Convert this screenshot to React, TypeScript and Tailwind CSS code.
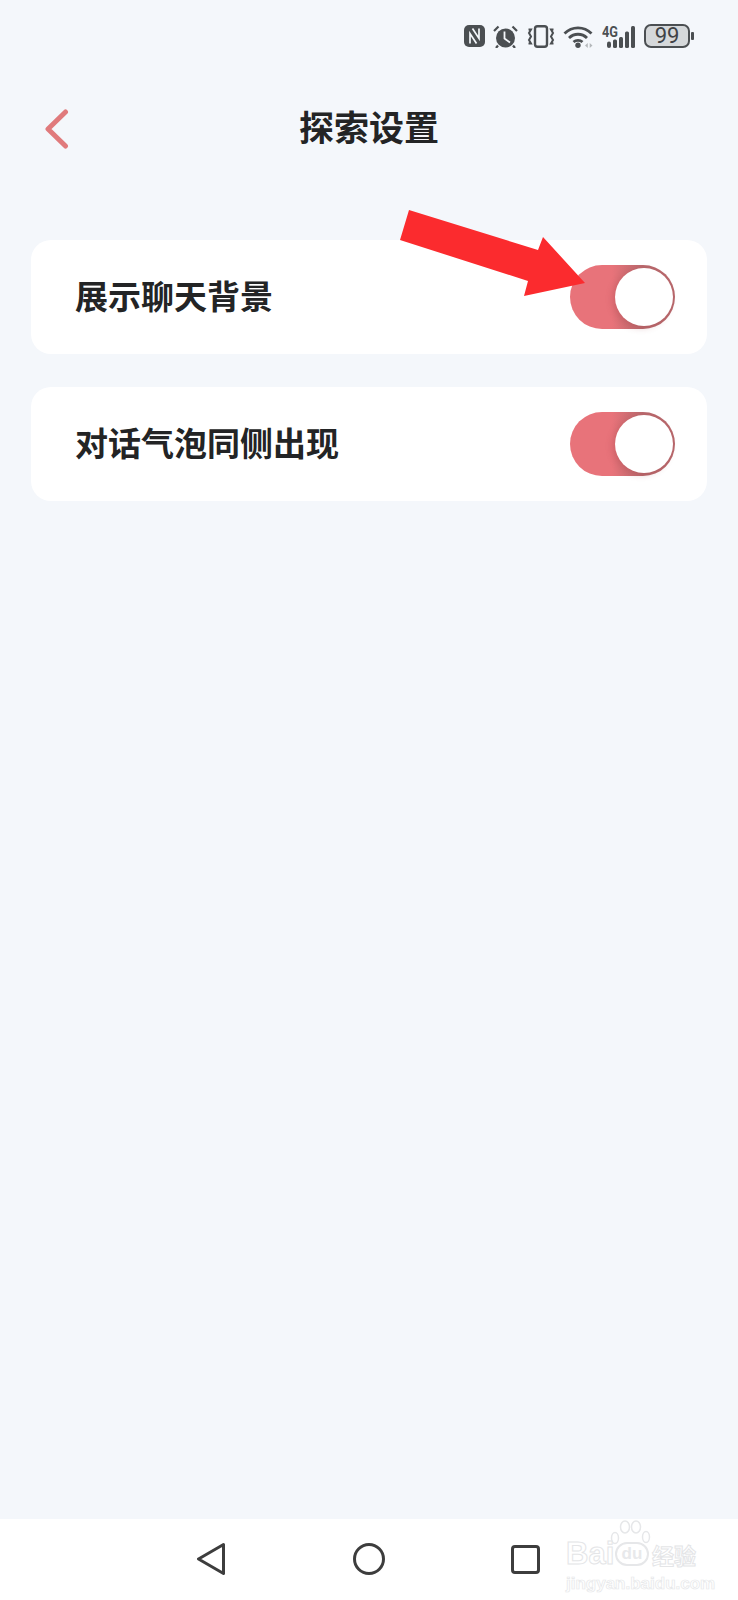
const NfcIcon = () => (
  <svg width="21" height="22" viewBox="0 0 21 22" fill="none">
    <rect width="21" height="22" rx="5" fill="#4b4f52" />
    <path d="M6 18.500V8.500l6.500 10M15 3.500v10L8.500 3.500" stroke="#f4f7fb" strokeWidth="1.700" />
  </svg>
);

const AlarmIcon = () => (
  <svg width="25" height="23" viewBox="0 0 25 23" fill="none">
    <circle cx="12.500" cy="13" r="9.500" fill="#4b4f52" />
    <path d="M11.500 6.500v7l5.500 4" stroke="#f4f7fb" strokeWidth="1.800" />
    <path d="M1 6l4.500-4.500M24 6l-4.500-4.500M5 20.500l-2 2.500M20 20.500l2 2.500" stroke="#4b4f52" strokeWidth="2.200" />
  </svg>
);

const VibrateIcon = () => (
  <svg width="28" height="23" viewBox="0 0 28 23" fill="none">
    <rect x="8" y="1.200" width="12" height="20.500" rx="2.500" stroke="#4b4f52" strokeWidth="2.400" />
    <path d="M1.500 4.500h2.500l-2 3.500 2 3.500-2 3.500 2 3.500H1.500M26.500 4.500H24l2 3.500-2 3.500 2 3.500-2 3.500h2.500" stroke="#4b4f52" strokeWidth="2" />
  </svg>
);

const WifiIcon = () => (
  <svg width="30" height="23" viewBox="0 0 30 23" fill="none">
    <path d="M1.500 8.500C9 1 21 1 28.500 8.500M6 13c5-5 13-5 18 0M10.500 17c2.500-2.300 6.500-2.300 9 0" stroke="#4b4f52" strokeWidth="2.800" />
    <circle cx="15" cy="20.300" r="2.700" fill="#4b4f52" />
    <path d="M22 20.500l2.800-2.500v5zM29.500 20.500l-2.800-2.500v5z" fill="#b4b8bb" />
  </svg>
);

const SignalIcon = () => (
  <svg width="34" height="23" viewBox="0 0 34 23" fill="none">
    <text x="0" y="12" fontSize="14" fontWeight="700" textLength="16" lengthAdjust="spacingAndGlyphs" fill="#4b4f52" fontFamily='"Roboto", sans-serif'>4G</text>
    <rect x="5" y="16.500" width="4" height="6.500" rx="2" fill="#4b4f52" />
    <rect x="11" y="14.500" width="4" height="8.500" rx="1.500" fill="#4b4f52" />
    <rect x="17" y="12" width="4" height="11" rx="1.500" fill="#4b4f52" />
    <rect x="23" y="6.500" width="4" height="16.500" rx="1.500" fill="#4b4f52" />
    <rect x="29" y="1" width="4" height="22" rx="1.500" fill="#4b4f52" />
  </svg>
);

const Battery = () => (
  <div className="flex items-center gap-[1px]">
    <div className="flex h-[24px] w-[46px] items-center justify-center rounded-[7px] border-2 border-[#4b4f52] bg-[#d5d8da] text-[22px] leading-none text-[#3f4346]" style={{ fontFamily: '"Roboto", sans-serif' }}>
      99
    </div>
    <div className="h-[8px] w-[3px] rounded-[1px] bg-[#4b4f52]" />
  </div>
);

const Toggle = () => (
  <div className="flex h-[64px] w-[105px] items-center justify-end rounded-full bg-linear-to-r from-[#e8737a] from-40% to-[#b8686c] to-70% pr-[2px]">
    <div className="h-[58px] w-[58px] rounded-full bg-white shadow-[-3px_2px_6px_rgba(150,60,65,0.25)]" />
  </div>
);

const Row = ({ label }: { label: string }) => (
  <div className="flex h-[114px] items-center justify-between rounded-[20px] bg-white pl-[44px] pr-[32px]">
    <span className="pb-[3px] text-[33px] leading-none font-bold text-[#232425]">{label}</span>
    <Toggle />
  </div>
);

export default function App() {
  return (
    <div
      className="relative flex h-[1600px] w-[738px] flex-col overflow-hidden bg-[#f4f7fb]"
      style={{ fontFamily: '"Noto Sans CJK SC", "Noto Sans", sans-serif' }}
    >
      {/* 状态栏 */}
      <div className="flex h-[88px] items-start justify-end pt-[24px] pr-[44px]">
        <div className="flex items-center">
          <div className="mr-[8px]"><NfcIcon /></div>
          <div className="mr-[9px]"><AlarmIcon /></div>
          <div className="mr-[8px]"><VibrateIcon /></div>
          <div className="mr-[9px]"><WifiIcon /></div>
          <div className="mr-[8px]"><SignalIcon /></div>
          <Battery />
        </div>
      </div>

      {/* 标题栏 */}
      <div className="relative flex h-[78px] items-center justify-center">
        <svg className="absolute top-[21px] left-[44px]" width="26" height="42" viewBox="0 0 26 42" fill="none">
          <path d="M21.500 3L4 20l17.500 17" stroke="#e07a7c" strokeWidth="5" strokeLinecap="round" strokeLinejoin="round" />
        </svg>
        <h1 className="pb-[3px] text-[35px] leading-none font-bold text-[#232425]">探索设置</h1>
      </div>

      <div className="mt-[74px] flex flex-col gap-[33px] pr-[31px] pl-[31px]">
        <Row label="展示聊天背景" />
        <Row label="对话气泡同侧出现" />
      </div>

      <div className="flex-1" />

      {/* 底部导航 */}
      <div className="flex h-[81px] items-start bg-white pt-[24px] pl-[197px]">
        <svg className="mr-[128px]" width="28" height="32" viewBox="0 0 28 32" fill="none">
          <path d="M26.500 1.500L1.500 16l25 14.500z" stroke="#3d3d3d" strokeWidth="3" strokeLinejoin="round" />
        </svg>
        <svg className="mr-[126px]" width="32" height="32" viewBox="0 0 32 32" fill="none">
          <circle cx="16" cy="16" r="14.500" stroke="#3d3d3d" strokeWidth="3" />
        </svg>
        <svg className="mt-[2px]" width="29" height="29" viewBox="0 0 29 29" fill="none">
          <rect x="1.500" y="1.500" width="26" height="26" rx="2.500" stroke="#3d3d3d" strokeWidth="3" />
        </svg>
      </div>

      {/* 百度经验水印 */}
      <div className="absolute top-[1520px] left-[566px] h-[66px] w-[134px] text-[#e8e9eb]">
        <svg className="absolute top-0 left-[43px]" width="42" height="40" viewBox="0 0 42 40" fill="none" stroke="#e6e7e9" strokeWidth="1.500">
          <ellipse cx="16" cy="7" rx="4.500" ry="6" />
          <ellipse cx="27" cy="7" rx="4.500" ry="6" />
          <ellipse cx="37" cy="17" rx="3.500" ry="5.500" />
          <ellipse cx="6" cy="18" rx="3.500" ry="5.500" />
        </svg>
        <div className="mt-[18px] flex items-center leading-none" style={{ fontFamily: '"Liberation Sans", sans-serif' }}>
          <span className="w-[49px] text-[31px] font-bold text-white [-webkit-text-stroke:1px_#e4e5e7]">Bai</span>
          <span className="flex h-[24px] w-[34px] items-center justify-center rounded-full border-2 border-[#e6e7e9] text-[17px] font-bold">du</span>
          <span className="ml-[3px] text-[22px] font-bold text-white [-webkit-text-stroke:1px_#e4e5e7]" style={{ fontFamily: '"Noto Sans CJK SC", sans-serif' }}>经验</span>
        </div>
        <div className="mt-[6px] text-[17px] leading-none font-bold text-white [-webkit-text-stroke:0.7px_#e6e7e9]" style={{ fontFamily: '"Liberation Sans", sans-serif' }}>jingyan.baidu.com</div>
      </div>

      {/* 红色箭头标注 */}
      <svg className="absolute top-[205px] left-[395px]" width="200" height="100" viewBox="0 0 200 100" fill="none">
        <polygon points="14,5 143,45 148,32 190,78 129,91 133,76 5,35" fill="#fb2b2e" />
      </svg>
    </div>
  );
}
